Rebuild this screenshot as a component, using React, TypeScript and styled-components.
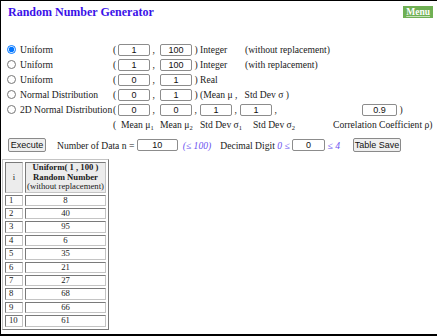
import React from "react";
import styled, { createGlobalStyle } from "styled-components";

const Global = createGlobalStyle`
  html, body { margin: 0; padding: 0; background: #fff; }
  body { font-family: "Liberation Serif", "DejaVu Serif", serif; color: #111; }
`;

const serif = `"Liberation Serif", "Times New Roman", "DejaVu Serif", serif`;
const sans = `"Liberation Sans", Arial, sans-serif`;

const Frame = styled.div`
  box-sizing: border-box;
  width: 437px;
  height: 336px;
  border-top: 1px solid #000;
  border-left: 1px solid #000;
  border-bottom: 2px solid #000;
  overflow: hidden;
  display: flex;
  flex-direction: column;
  align-items: flex-start;
  font-family: ${serif};
  color: #1a1a1a;
`;

const Header = styled.div`
  align-self: stretch;
  display: flex;
  justify-content: space-between;
  align-items: flex-start;
  padding: 4px 4px 0 7px;
  height: 30px;
`;

const Title = styled.h1`
  margin: 0;
  font-family: ${serif};
  font-size: 12px;
  font-weight: bold;
  color: #3a12e8;
  line-height: 14px;
`;

const MenuButton = styled.a`
  display: block;
  margin-top: 1px;
  background: #6fb054;
  color: #fff;
  font-family: ${serif};
  font-size: 9.5px;
  font-weight: bold;
  padding: 0 3px;
  line-height: 12px;
  height: 12px;
  text-decoration: underline;
  text-decoration-color: rgba(255,255,255,0.6);
`;

const Options = styled.div`
  display: flex;
  flex-direction: column;
  padding-left: 5px;
  margin-top: 7px;
`;

const Row = styled.div`
  display: flex;
  align-items: center;
  height: 15px;
  font-size: 9.6px;
  white-space: nowrap;
`;

const Choice = styled.label`
  display: flex;
  align-items: center;
  width: 107px;
  flex: none;
  gap: 4px;
`;

const Radio = styled.input`
  margin: 0 0 0 1px;
  width: 9px;
  height: 9px;
`;

const Cell = styled.span<{ $w: number }>`
  display: inline-flex;
  align-items: baseline;
  width: ${(p) => p.$w}px;
  flex: none;
`;

const NumBox = styled.input<{ $w?: number }>`
  box-sizing: border-box;
  width: ${(p) => p.$w ?? 32}px;
  height: 12px;
  border: 1px solid #8c8c8c;
  border-radius: 2px;
  padding: 0;
  font-family: ${sans};
  font-size: 9px;
  text-align: center;
  color: #111;
  background: #fff;
  flex: none;
`;

const Note = styled.span`
  display: inline-block;
`;

const Sub = styled.span`
  font-size: 6.5px;
  position: relative;
  top: 2px;
  line-height: 0;
`;

const Controls = styled.div`
  display: flex;
  align-items: center;
  height: 16px;
  margin-top: 5px;
  padding-left: 7px;
  font-size: 9.6px;
  white-space: nowrap;
`;

const Button = styled.button<{ $w: number }>`
  box-sizing: border-box;
  width: ${(p) => p.$w}px;
  height: 14px;
  padding: 0;
  border: 1px solid #8a8a8a;
  border-radius: 2px;
  background: #efefef;
  font-family: ${sans};
  font-size: 9px;
  color: #111;
  flex: none;
`;

const Hint = styled.span`
  color: #6a52f0;
  font-style: italic;
`;

const Spacer = styled.span<{ $w: number }>`
  display: inline-block;
  width: ${(p) => p.$w}px;
  flex: none;
`;

const Table = styled.table`
  margin: 6px 0 0 1px;
  border: 1px solid #999;
  border-color: #c4c4c4 #7a7a7a #7a7a7a #c4c4c4;
  border-spacing: 2px;
  font-family: ${serif};
  font-size: 8.7px;
  white-space: nowrap;
`;

const Th = styled.th<{ $w: number }>`
  min-width: ${(p) => p.$w}px;
  background: #ececec;
  border: 1px solid #888;
  border-color: #7a7a7a #c4c4c4 #c4c4c4 #7a7a7a;
  padding: 0 1px;
  line-height: 9.5px;
  font-weight: normal;
  text-align: center;
`;

const Td = styled.td`
  border: 1px solid #888;
  border-color: #7a7a7a #c4c4c4 #c4c4c4 #7a7a7a;
  line-height: 9.4px;
  padding: 0;
  text-align: center;
  background: #fff;
`;

const Idx = styled(Td)`
  text-align: left;
  padding-left: 3px;
`;

const values = [8, 40, 95, 6, 35, 21, 27, 68, 66, 61];

export default function App() {
  return (
    <Frame>
      <Global />
      <Header>
        <Title>Random Number Generator</Title>
        <MenuButton>Menu</MenuButton>
      </Header>
      <Options>
        <Row>
          <Choice><Radio type="radio" name="d" defaultChecked />Uniform</Choice>
          <Cell $w={5}>(</Cell>
          <NumBox defaultValue="1" />
          <Cell $w={10}>&nbsp;,</Cell>
          <NumBox defaultValue="100" />
          <Cell $w={8}>&nbsp;)</Cell>
          <Cell $w={45}>Integer</Cell>
          <Note>(without replacement)</Note>
        </Row>
        <Row>
          <Choice><Radio type="radio" name="d" />Uniform</Choice>
          <Cell $w={5}>(</Cell>
          <NumBox defaultValue="1" />
          <Cell $w={10}>&nbsp;,</Cell>
          <NumBox defaultValue="100" />
          <Cell $w={8}>&nbsp;)</Cell>
          <Cell $w={45}>Integer</Cell>
          <Note>(with replacement)</Note>
        </Row>
        <Row>
          <Choice><Radio type="radio" name="d" />Uniform</Choice>
          <Cell $w={5}>(</Cell>
          <NumBox defaultValue="0" />
          <Cell $w={10}>&nbsp;,</Cell>
          <NumBox defaultValue="1" />
          <Cell $w={8}>&nbsp;)</Cell>
          <Note>Real</Note>
        </Row>
        <Row>
          <Choice><Radio type="radio" name="d" />Normal Distribution</Choice>
          <Cell $w={5}>(</Cell>
          <NumBox defaultValue="0" />
          <Cell $w={10}>&nbsp;,</Cell>
          <NumBox defaultValue="1" />
          <Cell $w={8}>&nbsp;)</Cell>
          <Note>(Mean μ ,&nbsp;&nbsp; Std Dev σ )</Note>
        </Row>
        <Row>
          <Choice><Radio type="radio" name="d" />2D Normal Distribution</Choice>
          <Cell $w={5}>(</Cell>
          <NumBox defaultValue="0" />
          <Cell $w={10}>&nbsp;,</Cell>
          <NumBox defaultValue="0" />
          <Cell $w={8}>&nbsp;,</Cell>
          <NumBox defaultValue="1" />
          <Cell $w={8}>&nbsp;,</Cell>
          <NumBox defaultValue="1" />
          <Cell $w={90}>&nbsp;,</Cell>
          <NumBox defaultValue="0.9" $w={35} />
          <Cell $w={8}>&nbsp;)</Cell>
        </Row>
        <Row>
          <Spacer $w={107} />
          <Cell $w={47}>(&nbsp; Mean μ<Sub>1</Sub></Cell>
          <Cell $w={40}>Mean μ<Sub>2</Sub></Cell>
          <Cell $w={53}>Std Dev σ<Sub>1</Sub></Cell>
          <Cell $w={80}>Std Dev σ<Sub>2</Sub></Cell>
          <Note>Correlation Coefficient ρ)</Note>
        </Row>
      </Options>
      <Controls>
        <Button $w={38}>Execute</Button>
        <Spacer $w={11} />
        <span>Number of Data n =&nbsp;</span>
        <NumBox defaultValue="10" $w={41} />
        <Spacer $w={5} />
        <Hint>(≤ 100)</Hint>
        <Spacer $w={9} />
        <span>Decimal Digit&nbsp;</span>
        <Hint>0 ≤&nbsp;</Hint>
        <NumBox defaultValue="0" $w={33} />
        <Hint>&nbsp;≤ 4</Hint>
        <Spacer $w={13} />
        <Button $w={48}>Table Save</Button>
      </Controls>
      <Table>
        <thead>
          <tr>
            <Th $w={14}>i</Th>
            <Th $w={76}>
              <b>Uniform( 1 , 100 )</b>
              <br />
              <b>Random Number</b>
              <br />
              (without replacement)
            </Th>
          </tr>
        </thead>
        <tbody>
          {values.map((v, i) => (
            <tr key={i}>
              <Idx>{i + 1}</Idx>
              <Td>{v}</Td>
            </tr>
          ))}
        </tbody>
      </Table>
    </Frame>
  );
}
